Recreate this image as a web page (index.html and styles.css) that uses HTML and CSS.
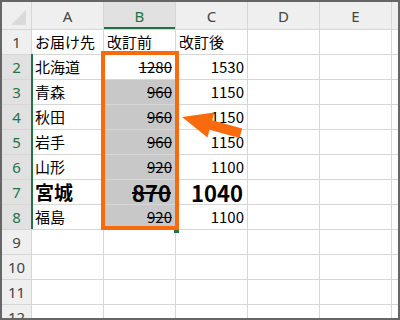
FILE: index.html
```html
<!DOCTYPE html>
<html lang="ja">
<head>
    <meta charset="UTF-8">
    <title>改訂前の価格</title>
    <link rel="stylesheet" href="styles.css">
</head>
<body>
    <div class="window">
        <div class="sheet">
            <div class="row head">
                <div class="corner">
                    <svg width="29" height="27" viewBox="0 0 29 27"><polygon points="9,23 24,23 24,8" fill="#d9d9d9"/></svg>
                </div>
                <div class="col">A</div>
                <div class="col on">B</div>
                <div class="col">C</div>
                <div class="col">D</div>
                <div class="col">E</div>
                <div class="col"></div>
            </div>
            <div class="row">
                <div class="num">1</div>
                <div class="cell">お届け先</div>
                <div class="cell">改訂前</div>
                <div class="cell">改訂後</div>
                <div class="cell"></div><div class="cell"></div><div class="cell"></div>
            </div>
            <div class="row">
                <div class="num on">2</div>
                <div class="cell">北海道</div>
                <div class="cell val old">1280</div>
                <div class="cell val">1530</div>
                <div class="cell"></div><div class="cell"></div><div class="cell"></div>
            </div>
            <div class="row">
                <div class="num on">3</div>
                <div class="cell">青森</div>
                <div class="cell val old shade">960</div>
                <div class="cell val">1150</div>
                <div class="cell"></div><div class="cell"></div><div class="cell"></div>
            </div>
            <div class="row">
                <div class="num on">4</div>
                <div class="cell">秋田</div>
                <div class="cell val old shade">960</div>
                <div class="cell val">1150</div>
                <div class="cell"></div><div class="cell"></div><div class="cell"></div>
            </div>
            <div class="row">
                <div class="num on">5</div>
                <div class="cell">岩手</div>
                <div class="cell val old shade">960</div>
                <div class="cell val">1150</div>
                <div class="cell"></div><div class="cell"></div><div class="cell"></div>
            </div>
            <div class="row">
                <div class="num on">6</div>
                <div class="cell">山形</div>
                <div class="cell val old shade">920</div>
                <div class="cell val">1100</div>
                <div class="cell"></div><div class="cell"></div><div class="cell"></div>
            </div>
            <div class="row big">
                <div class="num on">7</div>
                <div class="cell">宮城</div>
                <div class="cell val old shade">870</div>
                <div class="cell val">1040</div>
                <div class="cell"></div><div class="cell"></div><div class="cell"></div>
            </div>
            <div class="row">
                <div class="num on">8</div>
                <div class="cell">福島</div>
                <div class="cell val old shade">920</div>
                <div class="cell val">1100</div>
                <div class="cell"></div><div class="cell"></div><div class="cell"></div>
            </div>
            <div class="row">
                <div class="num">9</div>
                <div class="cell"></div><div class="cell"></div><div class="cell"></div><div class="cell"></div><div class="cell"></div><div class="cell"></div>
            </div>
            <div class="row">
                <div class="num">10</div>
                <div class="cell"></div><div class="cell"></div><div class="cell"></div><div class="cell"></div><div class="cell"></div><div class="cell"></div>
            </div>
            <div class="row">
                <div class="num">11</div>
                <div class="cell"></div><div class="cell"></div><div class="cell"></div><div class="cell"></div><div class="cell"></div><div class="cell"></div>
            </div>
            <div class="row">
                <div class="num">12</div>
                <div class="cell"></div><div class="cell"></div><div class="cell"></div><div class="cell"></div><div class="cell"></div><div class="cell"></div>
            </div>
        </div>

        <!-- selection edge, fill handle and the orange callout -->
        <div class="sel-edge"></div>
        <div class="handle"></div>
        <div class="outline"></div>
        <svg class="arrow" width="396" height="316" viewBox="0 0 396 316">
            <polygon transform="translate(180 115) rotate(15.4)"
                     points="0,0 30,-13 30,-5 61,-5 61,5 30,5 30,13" fill="#f86a0c"/>
        </svg>
    </div>
</body>
</html>
```

FILE: styles.css
```css
body {
    margin: 0;
    font-family: "Noto Sans CJK JP", "Noto Sans", sans-serif;
}
.window {
    position: relative;
    width: 396px;
    height: 316px;
    border: 2px solid #666;
    overflow: hidden;
    background: #fff;
}
.sheet {
    display: flex;
    flex-direction: column;
    gap: 1px;
    background: #d6d6d6;
}
.row {
    display: grid;
    grid-template-columns: 29px repeat(5, 71px) 1fr;
    gap: 1px;
    height: 24px;
}
.row.head {
    height: 27px;
}
.corner,
.col,
.num {
    background: #efefef;
    color: #444;
    font-family: "Noto Sans", sans-serif;
    font-size: 15px;
    display: flex;
    align-items: center;
    justify-content: center;
}
.corner svg {
    display: block;
}
.col.on {
    background: #e1e1e1;
    color: #217346;
    box-shadow: inset 0 -2px 0 #217346;
}
.num.on {
    background: #e1e1e1;
    color: #217346;
}
.cell {
    background: #fff;
    color: #000;
    font-size: 15px;
    line-height: 24px;
    padding: 0 3px;
    white-space: nowrap;
    overflow: hidden;
}
.cell.val {
    text-align: right;
}
.cell.old {
    text-decoration: line-through;
}
.cell.shade {
    background: #c8c8c8;
}
.row.big .cell {
    font-size: 19px;
    font-weight: bold;
    line-height: 24px;
    overflow: visible;
}
.row.big .cell.val {
    font-size: 22px;
    padding-right: 4px;
}
.sel-edge {
    position: absolute;
    left: 29px;
    top: 52px;
    width: 2px;
    height: 175px;
    background: #217346;
}
.handle {
    position: absolute;
    left: 172px;
    top: 226px;
    width: 5px;
    height: 5px;
    background: #217346;
}
.outline {
    position: absolute;
    left: 99px;
    top: 49px;
    width: 70px;
    height: 171px;
    border: 4px solid #f86a0c;
}
.arrow {
    position: absolute;
    left: 0;
    top: 0;
    pointer-events: none;
}
```
